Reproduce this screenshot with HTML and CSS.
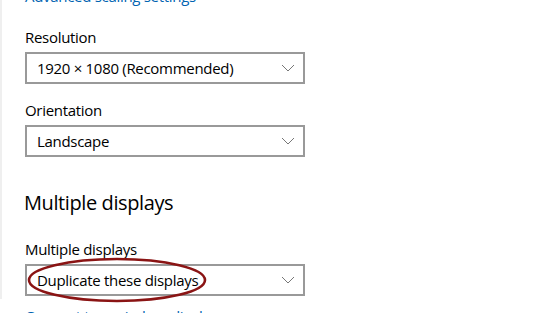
FILE: index.html
```html
<!DOCTYPE html>
<html lang="en">
<head>
  <meta charset="UTF-8" />
  <title>Display settings</title>
  <link rel="stylesheet" href="styles.css">
</head>
<body>
  <div class="panel">
    <a href="#" class="link top-link">Advanced scaling settings</a>

    <div class="field">
      <div class="label">Resolution</div>
      <div class="select">
        <span>1920 × 1080 (Recommended)</span>
        <svg class="chevron" width="14" height="8" viewBox="0 0 14 8"><path d="M1 1 L7 7 L13 1" fill="none" stroke="#777" stroke-width="1"/></svg>
      </div>
    </div>

    <div class="field">
      <div class="label">Orientation</div>
      <div class="select">
        <span>Landscape</span>
        <svg class="chevron" width="14" height="8" viewBox="0 0 14 8"><path d="M1 1 L7 7 L13 1" fill="none" stroke="#777" stroke-width="1"/></svg>
      </div>
    </div>

    <h2 class="section-title">Multiple displays</h2>

    <div class="field">
      <div class="label">Multiple displays</div>
      <div class="select marked">
        <span>Duplicate these displays</span>
        <svg class="chevron" width="14" height="8" viewBox="0 0 14 8"><path d="M1 1 L7 7 L13 1" fill="none" stroke="#777" stroke-width="1"/></svg>
        <!-- annotation circled by hand -->
        <svg class="ring" width="184" height="48" viewBox="0 0 184 48">
          <ellipse cx="92" cy="24" rx="88" ry="21" fill="none" stroke="#8a1414" stroke-width="2.6"/>
        </svg>
      </div>
    </div>

    <a href="#" class="link bottom-link">Connect to a wireless display</a>
  </div>
</body>
</html>
```

FILE: styles.css
```css
html, body {
  margin: 0;
  height: 100%;
  overflow: hidden;
  background: #fff;
}

body {
  font-family: 'Open Sans', 'Noto Sans', sans-serif;
  letter-spacing: -0.3px;
  color: #000;
}

.panel {
  border-left: 2px solid #efefef;
  padding-left: 23px;
  height: 100%;
  box-sizing: border-box;
}

.link {
  display: block;
  color: #0063b1;
  text-decoration: none;
  font-size: 15px;
  line-height: 20px;
}

.top-link {
  margin-top: -14px;
}

.field {
  margin-top: 21px;
}

.field + .field {
  margin-top: 16px;
}

.label {
  font-size: 15px;
  line-height: 20px;
  height: 20px;
  margin-bottom: 5px;
}

.select {
  position: relative;
  width: 280px;
  height: 32px;
  box-sizing: border-box;
  border: 2px solid #999;
  display: flex;
  align-items: center;
  justify-content: space-between;
  padding: 0 8px 0 10px;
  font-size: 15px;
}

.chevron {
  display: block;
}

.section-title {
  font-size: 20px;
  font-weight: 400;
  line-height: 28px;
  letter-spacing: -0.4px;
  margin: 32px 0 0 -1px;
}

.section-title + .field {
  margin-top: 22px;
}

.ring {
  position: absolute;
  left: -2px;
  top: -10px;
}

.bottom-link {
  margin-top: 10px;
}
```
